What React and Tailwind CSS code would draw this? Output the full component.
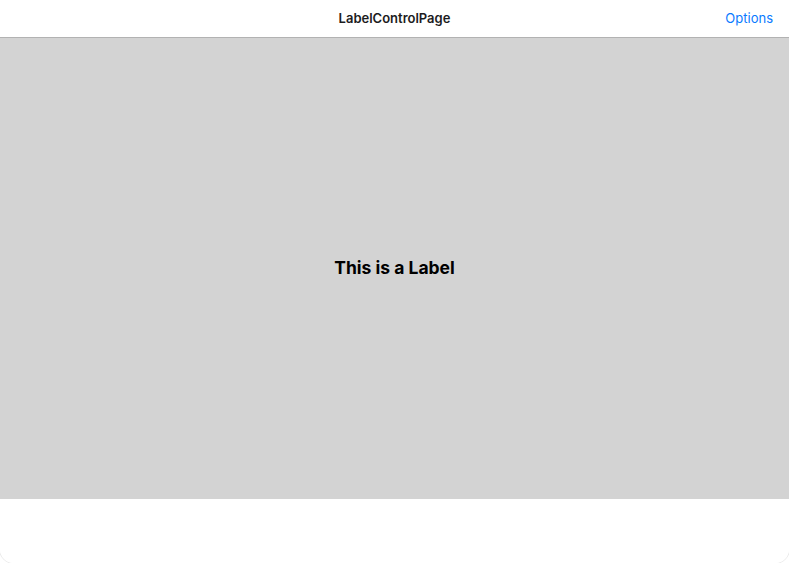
export default function App() {
  return (
    <div
      className="w-[789px] h-[563px] bg-white flex flex-col overflow-hidden rounded-b-[14px] shadow-[0_0_0_1px_rgba(0,0,0,0.08)]"
      style={{ fontFamily: "Inter, 'Noto Sans', sans-serif" }}
    >
      {/* Navigation bar */}
      <div className="h-[38px] shrink-0 flex items-center relative border-b border-[#b2b2b2] pt-[1px]">
        <div className="flex-1 text-center text-[13px] font-semibold text-[#1c1c1e]">
          LabelControlPage
        </div>
        <div className="absolute right-[16px] top-0 h-full flex items-center pt-[1px] text-[13px] text-[#0a7aff]">
          Options
        </div>
      </div>

      {/* Content */}
      <div className="h-[461px] shrink-0 bg-[#d3d3d3] flex items-center justify-center">
        <span className="text-[17.5px] font-bold text-black">This is a Label</span>
      </div>

      <div className="flex-1 bg-white" />
    </div>
  );
}
